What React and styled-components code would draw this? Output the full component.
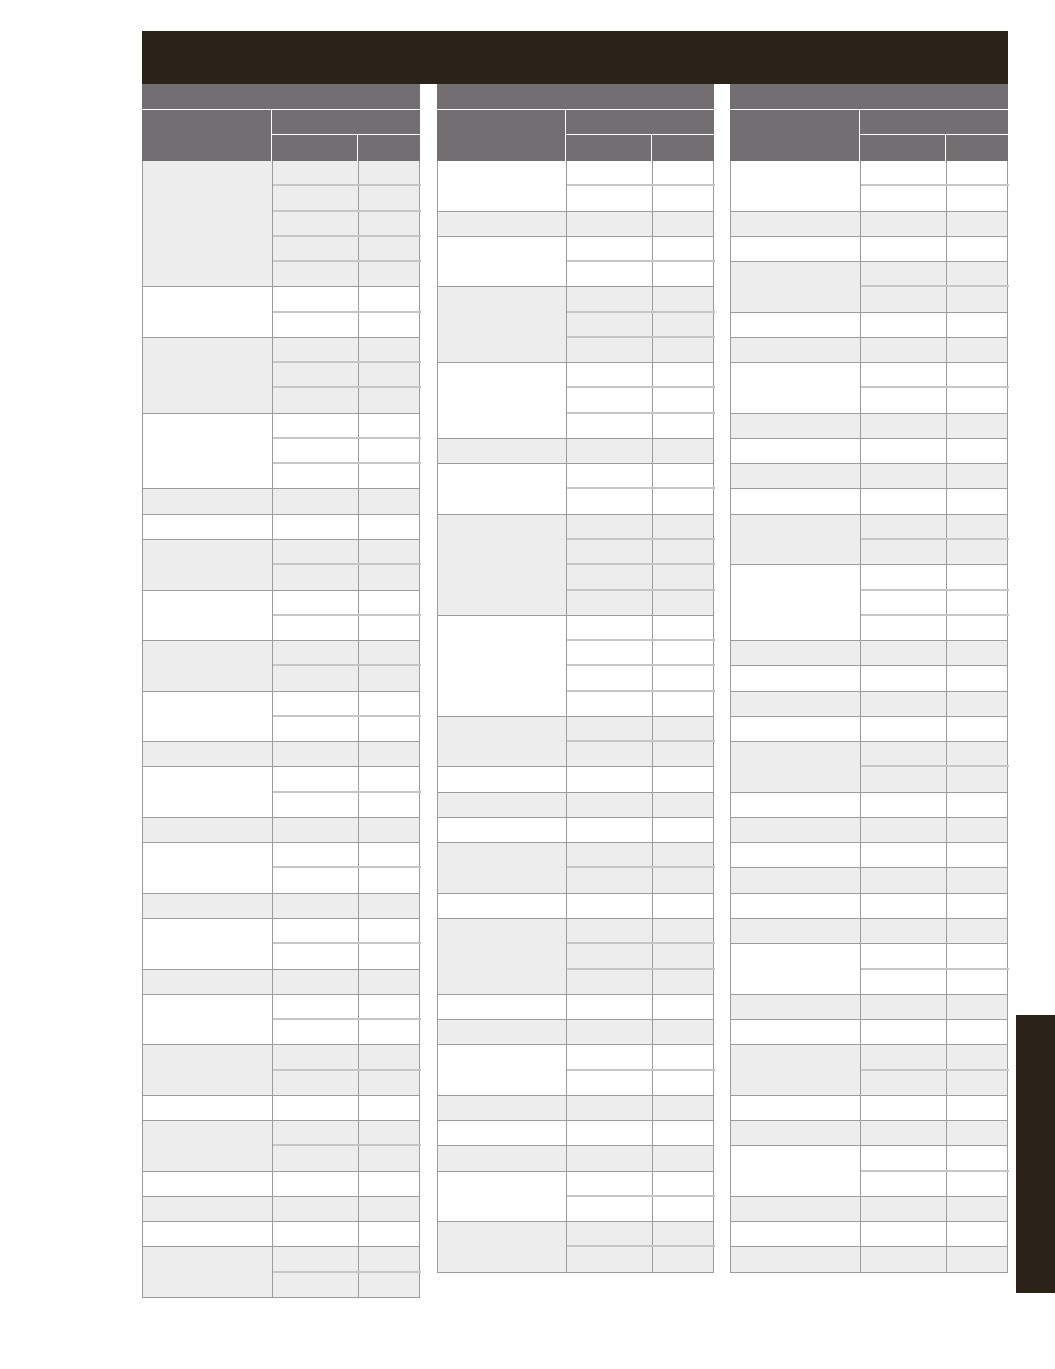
import styled, { createGlobalStyle } from "styled-components";

const GlobalStyle = createGlobalStyle`
  body {
    margin: 0;
    background: #ffffff;
    font-family: "Liberation Sans", Arial, sans-serif;
  }
`;

const ROW_H = 25.27;

// [number of rows, shaded]
const columns = [
  {
    widths: [130, 86, 62],
    groups: [
      [5, 1], [2, 0], [3, 1], [3, 0], [1, 1], [1, 0], [2, 1], [2, 0], [2, 1],
      [2, 0], [1, 1], [2, 0], [1, 1], [2, 0], [1, 1], [2, 0], [1, 1], [2, 0],
      [2, 1], [1, 0], [2, 1], [1, 0], [1, 1], [1, 0], [2, 1],
    ],
  },
  {
    widths: [129, 86, 62],
    groups: [
      [2, 0], [1, 1], [2, 0], [3, 1], [3, 0], [1, 1], [2, 0], [4, 1], [4, 0],
      [2, 1], [1, 0], [1, 1], [1, 0], [2, 1], [1, 0], [3, 1], [1, 0], [1, 1],
      [2, 0], [1, 1], [1, 0], [1, 1], [2, 0], [2, 1],
    ],
  },
  {
    widths: [130, 86, 62],
    groups: [
      [2, 0], [1, 1], [1, 0], [2, 1], [1, 0], [1, 1], [2, 0], [1, 1], [1, 0],
      [1, 1], [1, 0], [2, 1], [3, 0], [1, 1], [1, 0], [1, 1], [1, 0], [2, 1],
      [1, 0], [1, 1], [1, 0], [1, 1], [1, 0], [1, 1], [2, 0], [1, 1], [1, 0],
      [2, 1], [1, 0], [1, 1], [2, 0], [1, 1], [1, 0], [1, 1],
    ],
  },
];

function App() {
  return (
    <>
      <GlobalStyle />
      <Page>
        <TitleBar />
        <Columns>
          {columns.map((col, ci) => (
            <Table key={ci}>
              <Caption />
              <HeadRow>
                <HeadCell $w={col.widths[0]} />
                <HeadGroup>
                  <HeadTop />
                  <HeadBottom>
                    <HeadCell $w={col.widths[1]} />
                    <HeadCell $w={col.widths[2]} $last />
                  </HeadBottom>
                </HeadGroup>
              </HeadRow>
              <Body>
                {col.groups.map(([n, shaded], gi) => (
                  <Group key={gi} $shaded={shaded} $last={gi === col.groups.length - 1}>
                    <NameCell $w={col.widths[0]} />
                    <SubRows>
                      {Array.from({ length: n }).map((_, ri) => (
                        <SubRow key={ri} $last={ri === n - 1}>
                          <ValueCell $w={col.widths[1]} />
                          <ValueCell $w={col.widths[2]} $last />
                        </SubRow>
                      ))}
                    </SubRows>
                  </Group>
                ))}
              </Body>
            </Table>
          ))}
        </Columns>
        <SideTab />
      </Page>
    </>
  );
}

export default App;

const Page = styled.div`
  position: relative;
  width: 1055px;
  height: 1369px;
  padding: 31px 0 0 142px;
  box-sizing: border-box;
`;

const TitleBar = styled.div`
  width: 866px;
  height: 53px;
  background: #2b231a;
`;

const Columns = styled.div`
  display: grid;
  grid-template-columns: 278px 277px 278px;
  column-gap: 16.5px;
  width: 866px;
  align-items: start;
`;

const Table = styled.div`
  display: flex;
  flex-direction: column;
`;

const Caption = styled.div`
  height: 25px;
  background: #736e72;
  border-bottom: 1px solid #ffffff;
`;

const HeadRow = styled.div`
  display: flex;
  height: 51px;
  background: #736e72;
`;

const HeadCell = styled.div`
  width: ${(p) => p.$w}px;
  flex: none;
  box-sizing: border-box;
  border-right: ${(p) => (p.$last ? "none" : "1px solid #ffffff")};
`;

const HeadGroup = styled.div`
  flex: 1;
  display: flex;
  flex-direction: column;
`;

const HeadTop = styled.div`
  height: 24px;
  border-bottom: 1px solid #ffffff;
`;

const HeadBottom = styled.div`
  flex: 1;
  display: flex;
`;

const Body = styled.div`
  display: flex;
  flex-direction: column;
  border: 1px solid #9c9c9c;
  border-top: none;
`;

const Group = styled.div`
  display: flex;
  background: ${(p) => (p.$shaded ? "#ededed" : "#ffffff")};
  border-bottom: ${(p) => (p.$last ? "none" : "1px solid #9c9c9c")};
`;

const NameCell = styled.div`
  width: ${(p) => p.$w - 1}px;
  flex: none;
  border-right: 1px solid #9c9c9c;
`;

const SubRows = styled.div`
  flex: 1;
  display: flex;
  flex-direction: column;
`;

const SubRow = styled.div`
  display: flex;
  height: ${(p) => (p.$last ? ROW_H - 1 : ROW_H - 2)}px;
  border-bottom: ${(p) => (p.$last ? "none" : "2px solid #c6c6c6")};
`;

const ValueCell = styled.div`
  width: ${(p) => p.$w}px;
  flex: ${(p) => (p.$last ? 1 : "none")};
  box-sizing: border-box;
  border-right: ${(p) => (p.$last ? "none" : "1px solid #9c9c9c")};
`;

const SideTab = styled.div`
  position: absolute;
  right: 0;
  top: 1015px;
  width: 39px;
  height: 278px;
  background: #2b231a;
`;
